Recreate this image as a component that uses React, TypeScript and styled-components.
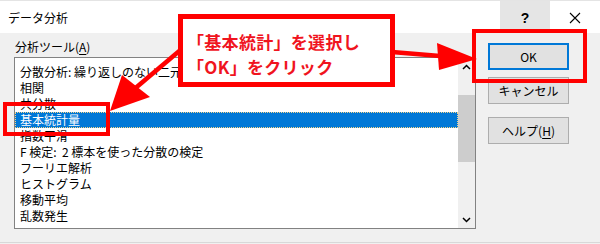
import styled, {createGlobalStyle} from 'styled-components';

const GlobalStyle = createGlobalStyle`
    html, body {
        margin: 0;
        padding: 0;
        background: #f0f0f0;
    }
    body {
        font-family: "Noto Sans CJK JP", "Noto Sans", sans-serif;
        font-size: 12px;
        color: #000;
    }
`;

const Dialog = styled.div`
    position: relative;
    width: 600px;
    height: 244px;
    overflow: hidden;
    background: #f0f0f0;
    border-top: 1px solid #e4e4e4;
    box-sizing: border-box;
`;

const TitleBar = styled.div`
    display: flex;
    align-items: flex-start;
    height: 32px;
    background: #fff;
`;

const Title = styled.div`
    flex: 1;
    padding: 9px 0 0 8px;
    font-size: 12px;
    line-height: 16px;
`;

const CaptionButton = styled.div<{$hover?: boolean}>`
    width: 50px;
    height: 27px;
    display: flex;
    align-items: center;
    justify-content: center;
    background: ${p => (p.$hover ? '#e5e5e5' : 'transparent')};
    font-family: "Liberation Sans", sans-serif;
    font-size: 14px;
    font-weight: bold;
    padding-top: 3px;
`;

const Body = styled.div`
    display: grid;
    grid-template-columns: 462px 81px;
    column-gap: 12px;
    padding: 6px 0 0 14px;
`;

const LeftColumn = styled.div`
    display: flex;
    flex-direction: column;
`;

const Label = styled.div`
    padding-left: 1px;
    line-height: 16px;
    height: 18px;
`;

const Key = styled.span`
    text-decoration: underline;
    text-underline-offset: 2px;
`;

const ListBox = styled.div`
    display: flex;
    height: 172px;
    box-sizing: border-box;
    border: 1px solid #828282;
    background: #fff;
`;

const Items = styled.div`
    flex: 1;
    padding-top: 6px;
    overflow: hidden;
`;

const Item = styled.div<{$selected?: boolean}>`
    height: 16px;
    line-height: 16px;
    padding-left: 5px;
    white-space: pre;
    box-sizing: border-box;
    background: ${p => (p.$selected ? '#0078d7' : 'transparent')};
    color: ${p => (p.$selected ? '#fff' : '#000')};
    outline: ${p => (p.$selected ? '1px dotted #f5d58a' : 'none')};
    outline-offset: -1px;
`;

const ScrollBar = styled.div`
    width: 17px;
    display: flex;
    flex-direction: column;
    background: #f0f0f0;
`;

const ScrollArrow = styled.div`
    height: 17px;
    display: flex;
    align-items: center;
    justify-content: center;
`;

const Track = styled.div`
    flex: 1;
    padding-top: 20px;
`;

const Thumb = styled.div`
    height: 67px;
    background: #cdcdcd;
`;

const ButtonColumn = styled.div`
    display: flex;
    flex-direction: column;
    padding-top: 4px;
`;

const Button = styled.div<{$default?: boolean; $gap: number}>`
    height: 27px;
    margin-bottom: ${p => p.$gap}px;
    box-sizing: border-box;
    display: flex;
    align-items: center;
    justify-content: center;
    background: #e1e1e1;
    border: ${p => (p.$default ? '2px solid #0078d7' : '1px solid #adadad')};
    line-height: 16px;
`;

const BottomEdge = styled.div`
    position: absolute;
    left: 0;
    right: 0;
    bottom: 1px;
    height: 1px;
    background: #d8d8d8;
`;

const Overlay = styled.div`
    position: absolute;
    inset: 0;
    pointer-events: none;
`;

const RedFrame = styled.div<{$x: number; $y: number; $w: number; $h: number; $b: number}>`
    position: absolute;
    left: ${p => p.$x}px;
    top: ${p => p.$y}px;
    width: ${p => p.$w}px;
    height: ${p => p.$h}px;
    box-sizing: border-box;
    border: ${p => p.$b}px solid #ff0000;
`;

const Callout = styled(RedFrame)`
    background: #fff;
    padding: 10px 0 0 4px;
    color: #f0141e;
    font-weight: bold;
    font-size: 17px;
    line-height: 25px;
    letter-spacing: 0.3px;
    white-space: nowrap;
`;

const Arrows = styled.svg`
    position: absolute;
    left: 0;
    top: 0;
`;

const items = [
    '分散分析: 繰り返しのない二元配置',
    '相関',
    '共分散',
    '基本統計量',
    '指数平滑',
    'F 検定:  2 標本を使った分散の検定',
    'フーリエ解析',
    'ヒストグラム',
    '移動平均',
    '乱数発生',
];

const App = () => {
    return (
        <>
            <GlobalStyle />
            <Dialog>
                <TitleBar>
                    <Title>データ分析</Title>
                    <CaptionButton $hover>?</CaptionButton>
                    <CaptionButton>
                        <svg width="12" height="12" viewBox="0 0 12 12">
                            <path d="M1 1 L11 11 M11 1 L1 11" stroke="#000" strokeWidth="1.1" />
                        </svg>
                    </CaptionButton>
                </TitleBar>
                <Body>
                    <LeftColumn>
                        <Label>
                            分析ツール(<Key>A</Key>)
                        </Label>
                        <ListBox>
                            <Items>
                                {items.map(item => (
                                    <Item key={item} $selected={item === '基本統計量'}>
                                        {item}
                                    </Item>
                                ))}
                            </Items>
                            <ScrollBar>
                                <ScrollArrow>
                                    <svg width="9" height="6" viewBox="0 0 9 6">
                                        <path d="M1 5 L4.5 1.5 L8 5" stroke="#000" strokeWidth="1.5" fill="none" />
                                    </svg>
                                </ScrollArrow>
                                <Track>
                                    <Thumb />
                                </Track>
                                <ScrollArrow>
                                    <svg width="9" height="6" viewBox="0 0 9 6">
                                        <path d="M1 1 L4.5 4.5 L8 1" stroke="#000" strokeWidth="1.5" fill="none" />
                                    </svg>
                                </ScrollArrow>
                            </ScrollBar>
                        </ListBox>
                    </LeftColumn>
                    <ButtonColumn>
                        <Button $default $gap={7}>OK</Button>
                        <Button $gap={13}>キャンセル</Button>
                        <Button $gap={0}>
                            ヘルプ(<Key>H</Key>)
                        </Button>
                    </ButtonColumn>
                </Body>
                <BottomEdge />
                <Overlay>
                    <RedFrame $x={3} $y={101} $w={107} $h={34} $b={4} />
                    <RedFrame $x={472} $y={28} $w={115} $h={54} $b={4} />
                    <Arrows width="600" height="244" viewBox="0 0 600 244">
                        <line x1="184" y1="46" x2="132" y2="90" stroke="#ff0000" strokeWidth="4.5" />
                        <polygon points="122,74 150,96 110,110" fill="#ff0000" />
                        <line x1="392" y1="51" x2="440" y2="55" stroke="#ff0000" strokeWidth="4.5" />
                        <polygon points="437,42 439,69 477,58" fill="#ff0000" />
                    </Arrows>
                    <Callout $x={178} $y={13} $w={217} $h={73} $b={5}>
                        <div>「基本統計」を選択し</div>
                        <div>「OK」をクリック</div>
                    </Callout>
                </Overlay>
            </Dialog>
        </>
    );
};

export default App;
